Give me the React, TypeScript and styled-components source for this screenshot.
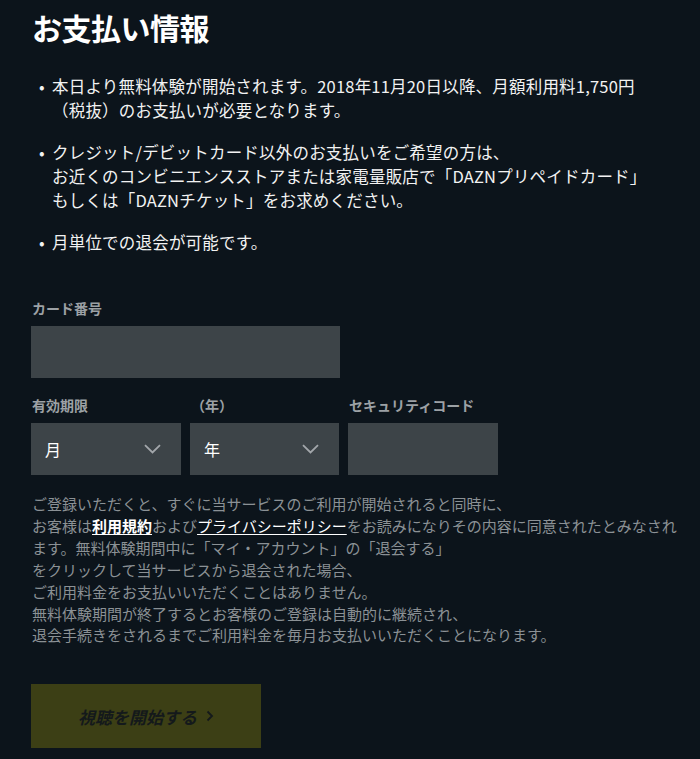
import React from "react";
import styled, { createGlobalStyle } from "styled-components";

const GlobalStyle = createGlobalStyle`
  html, body {
    margin: 0;
    padding: 0;
    background: #0c141b;
  }
  body {
    font-family: "Noto Sans CJK JP", "Noto Sans", sans-serif;
  }
`;

const Page = styled.main`
  width: 700px;
  min-height: 759px;
  box-sizing: border-box;
  padding: 6px 20px 12px 31px;
  background: #0c141b;
  color: #ffffff;
`;

const Title = styled.h1`
  margin: 0 0 0 1px;
  font-size: 30px;
  line-height: 42px;
  font-weight: 700;
  letter-spacing: -0.5px;
`;

const Notes = styled.ul`
  margin: 26px 0 0;
  padding: 0 0 0 21px;
  display: flex;
  flex-direction: column;
  gap: 18px;
`;

const Note = styled.li`
  font-size: 16.5px;
  line-height: 24px;
  letter-spacing: 0.2px;
  color: #f2f2f2;
  list-style: none;
  position: relative;
  white-space: nowrap;

  &::before {
    content: "•";
    position: absolute;
    left: -13px;
    top: 0;
  }
`;

const Form = styled.div`
  margin-top: 44px;
  display: flex;
  flex-direction: column;
  gap: 17px;
`;

const FieldRow = styled.div`
  display: flex;
  gap: 9px;
`;

const Field = styled.label`
  display: flex;
  flex-direction: column;
  gap: 8px;
`;

const Label = styled.span`
  font-size: 14px;
  line-height: 20px;
  font-weight: 700;
  color: #9ca1a5;
  white-space: nowrap;
  padding-left: 1px;
`;

const Box = styled.div<{ $w: number }>`
  width: ${(p) => p.$w}px;
  height: 52px;
  box-sizing: border-box;
  background: #3d4448;
  display: flex;
  align-items: center;
  justify-content: space-between;
  padding: 0 20px 0 14px;
  font-size: 16px;
  color: #ffffff;
`;

const Chevron = () => (
  <svg width="17" height="10" viewBox="0 0 17 10" fill="none">
    <path d="M1 1.2 L8.5 8.5 L16 1.2" stroke="#a3a7ab" strokeWidth="1.8" />
  </svg>
);

const Disclaimer = styled.p`
  margin: 18px 0 0 1px;
  font-size: 15px;
  line-height: 21.9px;
  color: #8b9195;
  width: 655px;
`;

const TermLink = styled.a<{ $bold?: boolean }>`
  color: #ffffff;
  font-weight: ${(p) => (p.$bold ? 700 : 400)};
  text-decoration: underline;
  text-underline-offset: 2px;
`;

const StartButton = styled.div`
  margin-top: 38px;
  width: 230px;
  height: 64px;
  background: #3c3f15;
  display: flex;
  align-items: center;
  justify-content: center;
  gap: 9px;
`;

const StartLabel = styled.span`
  color: #14191b;
  font-size: 17px;
  font-weight: 700;
  font-style: italic;
`;

const StartArrow = () => (
  <svg width="8" height="12" viewBox="0 0 8 12" fill="none">
    <path d="M1.5 1.5 L6 6 L1.5 10.5" stroke="#14191b" strokeWidth="1.8" />
  </svg>
);

export default function App() {
  return (
    <>
      <GlobalStyle />
      <Page>
        <Title>お支払い情報</Title>
        <Notes>
          <Note>
            本日より無料体験が開始されます。2018年11月20日以降、月額利用料1,750円
            <br />
            （税抜）のお支払いが必要となります。
          </Note>
          <Note>
            クレジット/デビットカード以外のお支払いをご希望の方は、
            <br />
            お近くのコンビニエンスストアまたは家電量販店で「DAZNプリペイドカード」
            <br />
            もしくは「DAZNチケット」をお求めください。
          </Note>
          <Note>月単位での退会が可能です。</Note>
        </Notes>

        <Form>
          <Field>
            <Label>カード番号</Label>
            <Box $w={309} />
          </Field>
          <FieldRow>
            <Field>
              <Label>有効期限</Label>
              <Box $w={150}>
                月
                <Chevron />
              </Box>
            </Field>
            <Field>
              <Label>（年）</Label>
              <Box $w={149}>
                年
                <Chevron />
              </Box>
            </Field>
            <Field>
              <Label>セキュリティコード</Label>
              <Box $w={150} />
            </Field>
          </FieldRow>
        </Form>

        <Disclaimer>
          ご登録いただくと、すぐに当サービスのご利用が開始されると同時に、
          <br />
          お客様は<TermLink $bold>利用規約</TermLink>および
          <TermLink>プライバシーポリシー</TermLink>
          をお読みになりその内容に同意されたとみなされます。無料体験期間中に「マイ・アカウント」の「退会する」
          <br />
          をクリックして当サービスから退会された場合、
          <br />
          ご利用料金をお支払いいただくことはありません。
          <br />
          無料体験期間が終了するとお客様のご登録は自動的に継続され、
          <br />
          退会手続きをされるまでご利用料金を毎月お支払いいただくことになります。
        </Disclaimer>

        <StartButton role="button">
          <StartLabel>視聴を開始する</StartLabel>
          <StartArrow />
        </StartButton>
      </Page>
    </>
  );
}
